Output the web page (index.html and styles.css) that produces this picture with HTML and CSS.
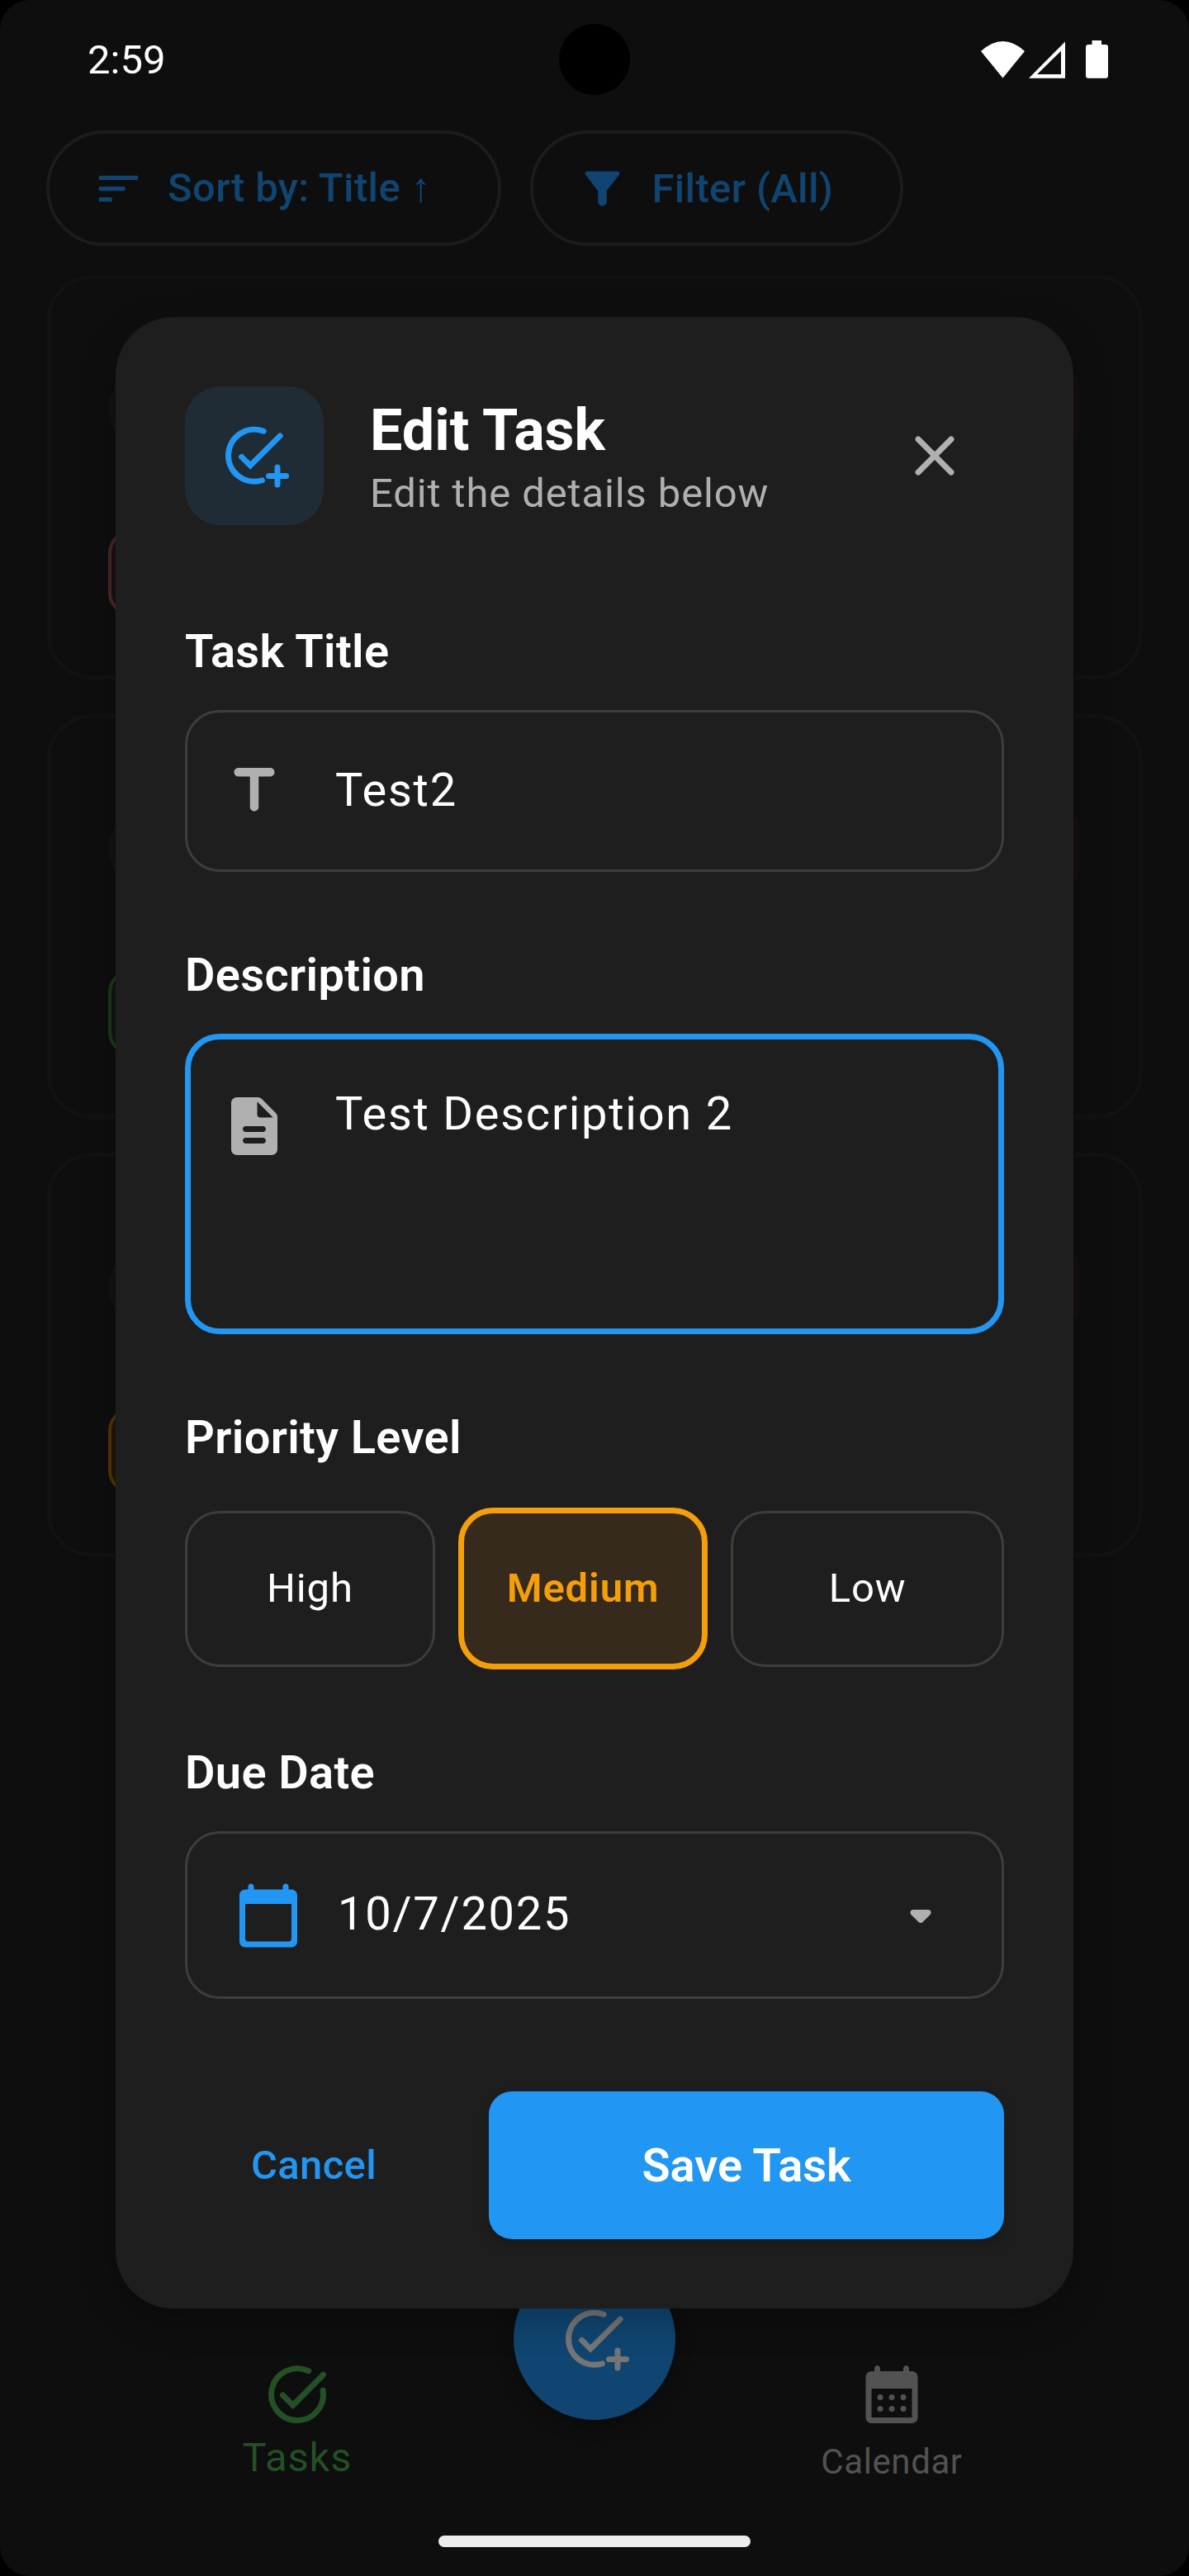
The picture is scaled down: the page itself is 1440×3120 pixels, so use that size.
FILE: index.html
```html
<!DOCTYPE html>
<html lang="en">
<head>
<meta charset="utf-8">
<title>Edit Task</title>
<link rel="stylesheet" href="styles.css">
</head>
<body>
<svg class="defs" aria-hidden="true">
  <symbol id="add-task" viewBox="0 0 24 24"><path d="M15.2 3.6A9 9 0 1 0 14.7 20.6M7.6 12.5l3 3L20.9 5.2M20 16.1v6M17 19.1h6" transform="translate(0 -.1)" fill="none" stroke="currentColor" stroke-width="2" stroke-linecap="round"/></symbol>
  <symbol id="task-alt" viewBox="0 0 24 24"><path d="M15.9 3.9A9 9 0 1 0 20.9 10.6M7 12.3l3.5 3.5L21 5.2" fill="none" stroke="currentColor" stroke-width="2" stroke-linecap="round"/></symbol>
</svg>
<div class="screen">
  <header class="statusbar">
    <span class="clock">2:59</span>
    <span class="camera"></span>
    <svg class="status-icons" viewBox="0 0 154 48" fill="#fff">
      <path d="M0 13Q26.500-11 53 13L26.500 45.500Z"/>
      <path d="M102 1.500V45.700H58ZM97 12.700L68 41H97Z" fill-rule="evenodd"/>
      <path d="M134.500 0h11.500v5h5q3 0 3 3v34.700q0 3-3 3h-21q-3 0-3-3V8q0-3 3-3h4.500z"/>
    </svg>
  </header>

  <div class="filters">
    <button class="chip">
      <svg class="icon-s" viewBox="0 0 24 24"><path d="M3 18h6v-2H3zM3 6v2h18V6zM3 13h12v-2H3z" fill="currentColor"/></svg>
      <span class="chip-sort">Sort by: Title <span class="arrow">↑</span></span>
    </button>
    <button class="chip">
      <svg class="icon-s" viewBox="0 0 24 24"><path d="M4.250 5.610C6.570 8.590 10 13 10 13v5c0 1.100.9 2 2 2s2-.9 2-2v-5s3.430-4.410 5.750-7.390C20.260 4.950 19.790 4 18.950 4H5.040c-.83 0-1.310.95-.79 1.610z" fill="currentColor"/></svg>
      <span>Filter (All)</span>
    </button>
  </div>

  <main class="cards">
    <article class="card high"><div class="card-top"><i class="check"></i><i class="delete"></i></div><i class="tag"></i></article>
    <article class="card low"><div class="card-top"><i class="check"></i><i class="delete"></i></div><i class="tag"></i></article>
    <article class="card medium"><div class="card-top"><i class="check"></i><i class="delete"></i></div><i class="tag"></i></article>
  </main>

  <nav class="tabs">
    <a class="tab active"><svg class="icon"><use href="#task-alt"/></svg><span>Tasks</span></a>
    <a class="tab"><svg class="icon" viewBox="0 0 24 24"><path fill="currentColor" fill-rule="evenodd" d="M19 4h-1V3c0-.55-.45-1-1-1s-1 .45-1 1v1H8V3c0-.55-.45-1-1-1s-1 .45-1 1v1H5c-1.110 0-2 .9-2 2v14c0 1.100.89 2 2 2h14c1.100 0 2-.9 2-2V6c0-1.100-.9-2-2-2zm0 16H5V10h14z"/><g fill="currentColor"><circle cx="8" cy="13" r="1"/><circle cx="12" cy="13" r="1"/><circle cx="16" cy="13" r="1"/><circle cx="8" cy="17" r="1"/><circle cx="12" cy="17" r="1"/><circle cx="16" cy="17" r="1"/></g></svg><span>Calendar</span></a>
  </nav>
  <button class="fab"><svg class="icon"><use href="#add-task"/></svg></button>
  <div class="home-bar"></div>

  <section class="dialog" role="dialog">
    <div class="dialog-head">
      <div class="badge"><svg class="icon"><use href="#add-task"/></svg></div>
      <div class="heading"><h1>Edit Task</h1><p>Edit the details below</p></div>
      <button class="close"><svg class="icon" viewBox="0 0 24 24"><path d="M6.300 6.300L17.700 17.700M17.700 6.300L6.300 17.700" stroke="currentColor" stroke-width="2" stroke-linecap="round"/></svg></button>
    </div>

    <label class="label first">Task Title</label>
    <div class="field">
      <svg class="icon" viewBox="0 0 24 24"><path d="M5 5.500C5 6.330 5.670 7 6.500 7h4v10.500c0 .83.67 1.500 1.500 1.500s1.500-.67 1.500-1.500V7h4c.83 0 1.500-.67 1.500-1.500S18.330 4 17.500 4h-11C5.670 4 5 4.670 5 5.500z" fill="currentColor"/></svg>
      <span class="value">Test2</span>
    </div>

    <label class="label">Description</label>
    <div class="field area">
      <svg class="icon" viewBox="0 0 24 24"><path d="M14.590 2.590c-.38-.38-.89-.59-1.420-.59H6c-1.100 0-2 .9-2 2v16c0 1.100.89 2 1.990 2H18c1.100 0 2-.9 2-2V8.830c0-.53-.21-1.040-.59-1.410l-4.820-4.830zM15 18H9c-.55 0-1-.45-1-1s.45-1 1-1h6c.55 0 1 .45 1 1s-.45 1-1 1zm0-4H9c-.55 0-1-.45-1-1s.45-1 1-1h6c.55 0 1 .45 1 1s-.45 1-1 1zm-2-6V3.500L18.500 9H14c-.55 0-1-.45-1-1z" fill="currentColor"/></svg>
      <span class="value">Test Description 2</span>
    </div>

    <label class="label">Priority Level</label>
    <div class="levels">
      <button class="level">High</button>
      <button class="level selected">Medium</button>
      <button class="level">Low</button>
    </div>

    <label class="label">Due Date</label>
    <div class="date">
      <svg class="icon calendar" viewBox="0 0 24 24"><path d="M20 3h-1V2c0-.55-.45-1-1-1s-1 .45-1 1v1H7V2c0-.55-.45-1-1-1s-1 .45-1 1v1H4c-1.100 0-2 .9-2 2v16c0 1.100.9 2 2 2h16c1.100 0 2-.9 2-2V5c0-1.100-.9-2-2-2zm-1 18H5c-.55 0-1-.45-1-1V8h16v12c0 .55-.45 1-1 1z" fill="currentColor"/></svg>
      <span class="value">10/7/2025</span>
      <svg class="icon caret" viewBox="0 0 24 24"><path d="M8.710 11.710l2.590 2.590c.39.39 1.020.39 1.410 0l2.590-2.590c.63-.63.18-1.710-.71-1.710H9.410c-.89 0-1.330 1.080-.7 1.710z" fill="currentColor"/></svg>
    </div>

    <div class="actions">
      <button class="cancel">Cancel</button>
      <button class="save">Save Task</button>
    </div>
  </section>
</div>
</body>
</html>
```
FILE: styles.css
```css
* { box-sizing: border-box; margin: 0; padding: 0; }
html, body { background: #000; }
body { font-family: Roboto, "Liberation Sans", sans-serif; color: #fff; }
button { font: inherit; color: inherit; background: none; border: 0; }
.defs { position: absolute; width: 0; height: 0; }
.icon { width: 84px; height: 84px; flex: none; display: block; }
.icon-s { width: 63px; height: 63px; flex: none; display: block; }

.screen {
  position: relative;
  width: 1440px;
  height: 3120px;
  overflow: hidden;
  background: #0e0e0e;
  border-radius: 36px;
}

/* status bar */
.statusbar {
  height: 158px;
  padding: 49px 98px 0 106px;
  display: flex;
  justify-content: space-between;
  align-items: flex-start;
}
.clock { font-size: 49px; line-height: 47px; }
.camera {
  position: absolute;
  left: 677px;
  top: 29px;
  width: 86px;
  height: 86px;
  border-radius: 50%;
  background: #000;
}
.status-icons { width: 154px; height: 48px; }

/* filter chips */
.filters { display: flex; gap: 35px; padding: 0 56px; height: 175px; }
.chip {
  height: 140px;
  padding: 0 81px 0 52px;
  border: 4px solid #1c1c1c;
  border-radius: 70px;
  display: flex;
  align-items: center;
  gap: 28px;
  color: #0f4570;
  font-size: 49px;
  font-weight: 500;
  letter-spacing: .35px;
  white-space: nowrap;
}
.chip-sort { padding-bottom: 2px; }
.arrow { font-weight: 400; }

/* task cards */
.cards { display: flex; flex-direction: column; gap: 41.500px; padding: 0 56px; }
.card {
  height: 490px;
  border: 5px solid #121212;
  border-radius: 56px;
  padding: 99px 70px 0;
}
.card-top { display: flex; justify-content: space-between; align-items: center; height: 118px; }
.check { width: 84px; height: 84px; border: 7px solid #131313; border-radius: 50%; }
.delete { width: 118px; height: 118px; border-radius: 42px; background: #180f0f; }
.tag {
  display: block;
  width: 250px;
  height: 104px;
  margin-top: 87px;
  border: 4px solid var(--line);
  border-radius: 28px;
  background: var(--tint);
}
.high { --line: #4b2626; --tint: #1a1010; }
.low { --line: #193a1b; --tint: #0f170f; }
.medium { --line: #543306; --tint: #1d160b; }

/* bottom navigation */
.tabs {
  position: absolute;
  inset: 2858px 0 auto;
  display: flex;
}
.tab {
  width: 720px;
  display: flex;
  flex-direction: column;
  align-items: center;
  color: #525252;
  font-size: 42px;
  line-height: 60px;
  letter-spacing: .600px;
}
.tab span { margin-top: 10px; }
.tab.active { color: #235025; font-size: 49px; line-height: 70px; letter-spacing: .875px; }
.tab.active span { margin-top: 0; }
.fab {
  position: absolute;
  left: 622px;
  top: 2735px;
  width: 196px;
  height: 196px;
  border-radius: 50%;
  background: #0f4570;
  color: #757575;
  display: flex;
  align-items: center;
  justify-content: center;
  box-shadow: 0 8px 20px rgba(0, 0, 0, .3);
}
.home-bar {
  position: absolute;
  left: 531px;
  top: 3071px;
  width: 378px;
  height: 14px;
  border-radius: 7px;
  background: #ececec;
}

/* dialog */
.dialog {
  position: absolute;
  left: 140px;
  top: 384px;
  width: 1160px;
  height: 2412px;
  padding: 84px;
  border-radius: 70px;
  background: #1e1e1e;
  box-shadow: 0 14px 40px rgba(0, 0, 0, .25);
  display: flex;
  flex-direction: column;
}
.dialog-head { display: flex; align-items: center; height: 168px; }
.badge, .close {
  width: 168px;
  height: 168px;
  display: flex;
  align-items: center;
  justify-content: center;
}
.badge { border-radius: 42px; background: #1f2b35; color: #2196f3; }
.close { color: #b0b0b0; }
.heading { flex: 1; padding: 7px 0 0 56px; }
.heading h1 { font-size: 70px; line-height: 84px; font-weight: 700; }
.heading p { font-size: 49px; line-height: 70px; letter-spacing: .875px; color: #b0b0b0; }

.label {
  height: 84px;
  margin-top: 84px;
  font-size: 56px;
  line-height: 82px;
  font-weight: 600;
  letter-spacing: .350px;
}
.label.first { margin-top: 112px; }
.value { font-size: 56px; line-height: 84px; letter-spacing: 1.750px; }
.field {
  height: 196px;
  margin-top: 28px;
  padding-left: 39px;
  border: 3px solid #3d3d3d;
  border-radius: 42px;
  display: flex;
  align-items: center;
  gap: 56px;
  color: #b0b0b0;
}
.field .value { color: #fff; padding-bottom: 2px; }
.field.area {
  height: 364px;
  padding: 48px 0 0 35px;
  border: 7px solid #2196f3;
  align-items: flex-start;
}
.field.area .icon { margin-top: 15px; }

.levels { display: flex; align-items: center; gap: 28px; height: 196px; margin-top: 42px; }
.level {
  flex: none;
  width: 302.660px;
  height: 189px;
  border: 3px solid #3d3d3d;
  border-radius: 42px;
  font-size: 49px;
  line-height: 70px;
  letter-spacing: .875px;
}
.level:last-child { width: 330.660px; }
.level.selected {
  height: 196px;
  border: 7px solid #f59e0b;
  background: #352a1c;
  color: #f59e0b;
  font-weight: 600;
}

.date {
  height: 203px;
  margin-top: 28px;
  padding: 0 56px;
  border: 3px solid #3d3d3d;
  border-radius: 42px;
  display: flex;
  align-items: center;
  gap: 42px;
}
.date .value { flex: 1; padding-bottom: 3px; }
.calendar { color: #2196f3; }
.caret { color: #b0b0b0; }

.actions { display: flex; gap: 56px; margin-top: auto; height: 179px; }
.cancel { flex: 1; color: #2196f3; font-size: 49px; font-weight: 500; letter-spacing: .350px; }
.save {
  flex: 0 0 624px;
  border-radius: 28px;
  background: #2196f3;
  font-size: 56px;
  font-weight: 600;
  box-shadow: 0 7px 14px rgba(0, 0, 0, .2);
}
```
